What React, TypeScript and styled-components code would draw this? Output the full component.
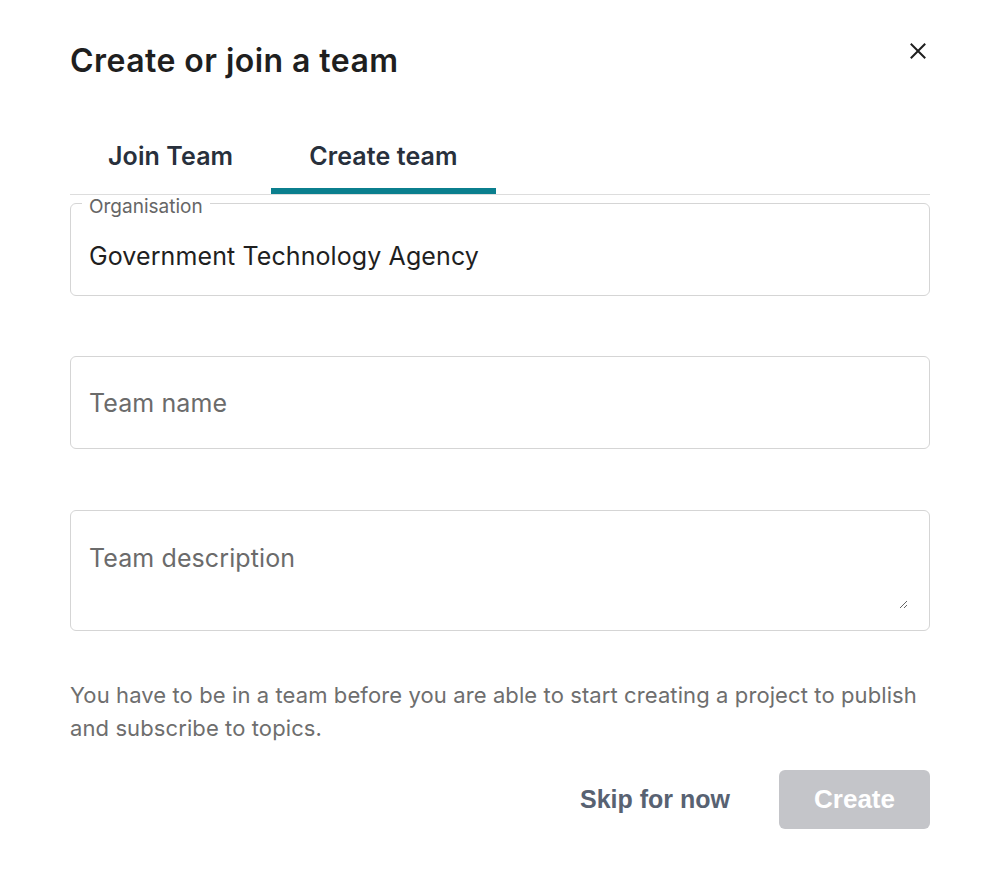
import React from "react";
import styled, { createGlobalStyle } from "styled-components";

const GlobalStyle = createGlobalStyle`
  html, body { margin: 0; padding: 0; background: #ffffff; }
  body { font-family: Inter, "Noto Sans", sans-serif; -webkit-font-smoothing: antialiased; }
  * { box-sizing: border-box; }
`;

const Dialog = styled.div`
  width: 1000px;
  min-height: 896px;
  padding: 41px 70px 0;
  background: #fff;
  display: flex;
  flex-direction: column;
`;

const Header = styled.div`
  display: flex;
  justify-content: space-between;
  align-items: flex-start;
`;

const Title = styled.h1`
  margin: 0;
  font-family: Inter, sans-serif;
  font-size: 32px;
  line-height: 40px;
  font-weight: 600;
  letter-spacing: 0.45px;
  color: #1f1f1f;
`;

const CloseButton = styled.button`
  margin-top: -2px;
  width: 24px;
  height: 24px;
  padding: 0;
  border: 0;
  background: transparent;
  display: flex;
  align-items: center;
  justify-content: center;
  cursor: pointer;
`;

const TabList = styled.div`
  margin-top: 43px;
  display: flex;
  border-bottom: 1px solid #dddddd;
`;

const Tab = styled.button<{ $active?: boolean }>`
  padding: 16px 38px 16px;
  border: 0;
  border-bottom: 6px solid ${(p) => (p.$active ? "#0b7f8e" : "transparent")};
  background: transparent;
  font-family: Inter, sans-serif;
  font-size: 25px;
  line-height: 32px;
  font-weight: 600;
  letter-spacing: 0.1px;
  color: #28303c;
  cursor: pointer;
`;

const Form = styled.div`
  display: flex;
  flex-direction: column;
  margin-top: 8px;
`;

const FieldBox = styled.div<{ $height: number; $gap?: number; $pad?: string }>`
  position: relative;
  height: ${(p) => p.$height}px;
  margin-top: ${(p) => p.$gap ?? 0}px;
  padding: ${(p) => p.$pad ?? "0"};
  border: 1px solid #d5d5d5;
  border-radius: 6px;
  display: flex;
`;

const FloatLabel = styled.span`
  position: absolute;
  top: -7px;
  left: 11px;
  padding: 0 7px;
  background: #fff;
  font-family: Inter, sans-serif;
  font-size: 19px;
  line-height: 20px;
  color: #666666;
`;

const TextInput = styled.input<{ $pt: number }>`
  flex: 1;
  width: 100%;
  border: 0;
  outline: none;
  background: transparent;
  padding: ${(p) => p.$pt}px 18px 0;
  align-self: flex-start;
  font-family: Inter, sans-serif;
  font-size: 25px;
  line-height: 32px;
  letter-spacing: 0.1px;
  height: ${(p) => p.$pt + 32}px;
  color: #1f1f1f;
  &::placeholder { color: #6b6b6b; opacity: 1; }
`;

const TextArea = styled.textarea`
  flex: 1;
  border: 0;
  outline: none;
  background: transparent;
  padding: 0;
  font-family: Inter, sans-serif;
  font-size: 25px;
  line-height: 32px;
  letter-spacing: 0.1px;
  color: #1f1f1f;
  resize: vertical;
  &::placeholder { color: #6b6b6b; opacity: 1; }
`;

const HelpText = styled.p`
  margin: 48px 0 0;
  font-family: Inter, sans-serif;
  font-size: 22px;
  line-height: 33px;
  letter-spacing: 0.1px;
  color: #6e6e6e;
`;

const Actions = styled.div`
  margin-top: 25px;
  display: flex;
  justify-content: flex-end;
  align-items: center;
  gap: 25px;
`;

const BaseButton = styled.button`
  height: 59px;
  border: 0;
  border-radius: 6px;
  font-family: "Liberation Sans", Arial, sans-serif;
  font-weight: 700;
  font-size: 25px;
  cursor: pointer;
`;

const GhostButton = styled(BaseButton)`
  padding: 0 24px;
  background: transparent;
  color: #586272;
`;

const PrimaryButton = styled(BaseButton)`
  width: 151px;
  padding: 0;
  font-size: 26px;
  background: #c4c5c9;
  color: #ffffff;
  cursor: not-allowed;
`;

export default function App() {
  return (
    <>
      <GlobalStyle />
      <Dialog>
        <Header>
          <Title>Create or join a team</Title>
          <CloseButton aria-label="Close">
            <svg width="16" height="16" viewBox="0 0 16 16" fill="none">
              <path d="M1.5 1.5L14.5 14.5M14.5 1.5L1.5 14.5" stroke="#1f1f1f" strokeWidth="2" strokeLinecap="square" />
            </svg>
          </CloseButton>
        </Header>
        <TabList>
          <Tab>Join Team</Tab>
          <Tab $active>Create team</Tab>
        </TabList>
        <Form>
          <FieldBox $height={93}>
            <FloatLabel>Organisation</FloatLabel>
            <TextInput $pt={36} defaultValue="Government Technology Agency" readOnly />
          </FieldBox>
          <FieldBox $height={93} $gap={60}>
            <TextInput $pt={30} placeholder="Team name" />
          </FieldBox>
          <FieldBox $height={121} $gap={61} $pad="31px 21px 21px 18px">
            <TextArea placeholder="Team description" />
          </FieldBox>
        </Form>
        <HelpText>
          You have to be in a team before you are able to start creating a project to publish and subscribe to topics.
        </HelpText>
        <Actions>
          <GhostButton>Skip for now</GhostButton>
          <PrimaryButton disabled>Create</PrimaryButton>
        </Actions>
      </Dialog>
    </>
  );
}
